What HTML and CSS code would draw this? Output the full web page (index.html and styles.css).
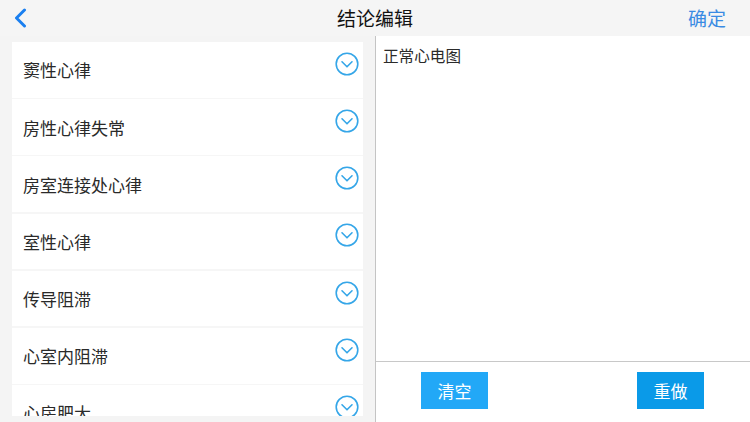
FILE: index.html
```html
<!DOCTYPE html>
<html lang="zh">
<head>
<meta charset="utf-8">
<link rel="stylesheet" href="styles.css">
</head>
<body>
<div class="app">
  <header class="nav">
    <div class="back">
      <svg width="14" height="20" viewBox="0 0 14 20"><path d="M11.5 2 L3.5 10 L11.5 18" fill="none" stroke="#1a7ff0" stroke-width="3" stroke-linecap="round" stroke-linejoin="round"/></svg>
    </div>
    <div class="title">结论编辑</div>
    <div class="ok">确定</div>
  </header>
  <main class="body">
    <section class="left">
      <div class="list">
        <div class="row"><span class="label">窦性心律</span><svg class="ico" viewBox="0 0 24 24"><circle cx="12" cy="12" r="10.8"/><path d="M7 9.8 L12 14.8 L17 9.8"/></svg></div>
        <div class="row"><span class="label">房性心律失常</span><svg class="ico" viewBox="0 0 24 24"><circle cx="12" cy="12" r="10.8"/><path d="M7 9.8 L12 14.8 L17 9.8"/></svg></div>
        <div class="row"><span class="label">房室连接处心律</span><svg class="ico" viewBox="0 0 24 24"><circle cx="12" cy="12" r="10.8"/><path d="M7 9.8 L12 14.8 L17 9.8"/></svg></div>
        <div class="row"><span class="label">室性心律</span><svg class="ico" viewBox="0 0 24 24"><circle cx="12" cy="12" r="10.8"/><path d="M7 9.8 L12 14.8 L17 9.8"/></svg></div>
        <div class="row"><span class="label">传导阻滞</span><svg class="ico" viewBox="0 0 24 24"><circle cx="12" cy="12" r="10.8"/><path d="M7 9.8 L12 14.8 L17 9.8"/></svg></div>
        <div class="row"><span class="label">心室内阻滞</span><svg class="ico" viewBox="0 0 24 24"><circle cx="12" cy="12" r="10.8"/><path d="M7 9.8 L12 14.8 L17 9.8"/></svg></div>
        <div class="row"><span class="label">心房肥大</span><svg class="ico" viewBox="0 0 24 24"><circle cx="12" cy="12" r="10.8"/><path d="M7 9.8 L12 14.8 L17 9.8"/></svg></div>
      </div>
    </section>
    <section class="right">
      <div class="editor">正常心电图</div>
      <div class="actions">
        <button class="btn btn-clear">清空</button>
        <button class="btn btn-redo">重做</button>
      </div>
    </section>
  </main>
</div>
</body>
</html>
```
FILE: styles.css
```css
* { box-sizing: border-box; }
html, body { margin: 0; padding: 0; }
body {
  width: 750px;
  height: 422px;
  overflow: hidden;
  background: #f4f4f4;
  font-family: "Noto Sans CJK SC", "Noto Sans", sans-serif;
}
.app { display: flex; flex-direction: column; height: 422px; }
.nav {
  height: 36px;
  display: flex;
  align-items: center;
  position: relative;
  background: #f5f5f5;
}
.back { width: 14px; height: 20px; margin-left: 13px; display: flex; }
.title {
  position: absolute;
  left: 0; right: 0;
  text-align: center;
  font-size: 19px;
  color: #111;
  line-height: 36px;
  pointer-events: none;
}
.ok {
  margin-left: auto;
  margin-right: 24px;
  font-size: 19px;
  color: #3a8be3;
  line-height: 36px;
}
.body { flex: 1; display: flex; min-height: 0; }
.left {
  width: 375px;
  padding: 6px 12px 6px 12px;
  display: flex;
  flex-direction: column;
}
.list {
  flex: 1;
  overflow: hidden;
  display: flex;
  flex-direction: column;
  gap: 1.5px;
  background: #f6f6f6;
}
.row {
  flex: 0 0 55.7px;
  background: #fff;
  display: flex;
  align-items: center;
  padding: 0 4px 0 11px;
}
.label { font-size: 17px; color: #2a2a2a; flex: 1; }
.ico {
  width: 24px;
  height: 24px;
  transform: translateY(-6px);
  fill: none;
  stroke: #35a6e8;
  stroke-width: 1.6;
  stroke-linecap: round;
  stroke-linejoin: round;
}
.right {
  flex: 1;
  border-left: 1px solid #c4c4c4;
  background: #fff;
  display: flex;
  flex-direction: column;
}
.editor {
  height: 326px;
  border-bottom: 1px solid #c8c8c8;
  padding: 7px 0 0 7px;
  font-size: 15.6px;
  color: #2a2a2a;
  line-height: 24px;
}
.actions {
  flex: 1;
  display: flex;
  align-items: flex-start;
  padding: 10px 0 0 45px;
}
.btn {
  width: 67px;
  height: 37px;
  border: none;
  border-radius: 0;
  color: #fff;
  font-size: 17px;
  font-family: "Noto Sans CJK SC", sans-serif;
  padding: 0;
}
.btn-clear { background: #22a8f7; }
.btn-redo { background: #0a9ae8; margin-left: 149px; }
```
